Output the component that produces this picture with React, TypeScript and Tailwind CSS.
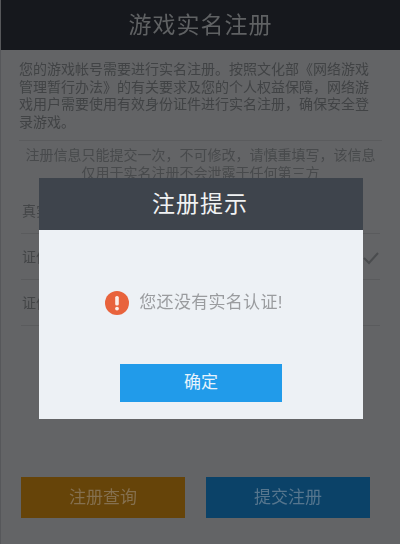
const font = { fontFamily: '"Liberation Sans", "Noto Sans CJK SC", sans-serif' };

function Row({ label, check }: { label: string; check?: boolean }) {
  return (
    <div className="h-[46px] pt-[2px] flex items-center justify-between border-b border-[#5a5b5d] pl-[1px] pr-[1px]">
      <span className="text-[14px] text-[#434547]">{label}</span>
      {check && (
        <svg width="16" height="14" viewBox="0 0 16 14" fill="none" stroke="#4a4c4e" strokeWidth="2">
          <path d="M1 7l5 5L15 2" />
        </svg>
      )}
    </div>
  );
}

export default function App() {
  return (
    <div style={font} className="relative w-[400px] h-[544px] overflow-hidden bg-[#636466] border-l border-[#56575a]">
      <header className="h-[50px] bg-[#16181d] flex items-center justify-center">
        <h1 className="text-[23px] font-normal tracking-[1px] text-[#5f6163] blur-[0.4px]">游戏实名注册</h1>
      </header>

      <main className="px-[20px] blur-[0.6px]">
        <p className="pt-[11px] pb-[9px] text-[14px] leading-[17.5px] text-[#414345] border-b border-[#5a5b5d] -mx-[2px]">
          您的游戏帐号需要进行实名注册。按照文化部《网络游戏管理暂行办法》的有关要求及您的个人权益保障，网络游戏用户需要使用有效身份证件进行实名注册，确保安全登录游戏。
        </p>
        <p className="pt-[5px] text-[14px] leading-[18px] text-center text-[#484a4c]">
          注册信息只能提交一次，不可修改，请慎重填写，该信息仅用于实名注册不会泄露于任何第三方
        </p>
        <div className="mt-[6px]">
          <Row label="真实姓名" />
          <Row label="证件类型" check />
          <Row label="证件号码" />
        </div>
      </main>

      <div className="absolute left-[20px] top-[477px] flex gap-[21px]">
        <button className="w-[164px] h-[41px] pt-[1px] bg-[#664409] text-[17px] text-[#85704f] blur-[0.3px]">注册查询</button>
        <button className="w-[164px] h-[41px] pt-[1px] bg-[#0b4268] text-[17px] text-[#56768e] blur-[0.3px]">提交注册</button>
      </div>

      {/* dialog */}
      <div className="absolute left-[38px] top-[178px] w-[324px] h-[241px] flex flex-col bg-[#edf1f5]">
        <div className="h-[52px] bg-[#3e444c] flex items-center justify-center text-[23px] tracking-[1px] text-[#f0f2f3]">
          <span className="-ml-[2px]">注册提示</span>
        </div>
        <div className="flex-1 flex flex-col items-center">
          <div className="mt-[60px] flex items-center gap-[10px] mr-[14px]">
            <svg width="24" height="24" viewBox="0 0 24 24">
              <circle cx="12" cy="12" r="12" fill="#e8633c" />
              <rect x="10.2" y="5" width="3.6" height="9.5" rx="1.6" fill="#fbeee8" />
              <circle cx="12" cy="17.6" r="1.9" fill="#fbeee8" />
            </svg>
            <span className="text-[17px] tracking-[0.3px] text-[#9a9c9f] blur-[0.3px]">您还没有实名认证!</span>
          </div>
          <button className="mt-[48px] w-[162px] h-[38px] pt-[1px] bg-[#219bea] text-[17px] text-[#e6f3fc]">确定</button>
        </div>
      </div>
    </div>
  );
}
